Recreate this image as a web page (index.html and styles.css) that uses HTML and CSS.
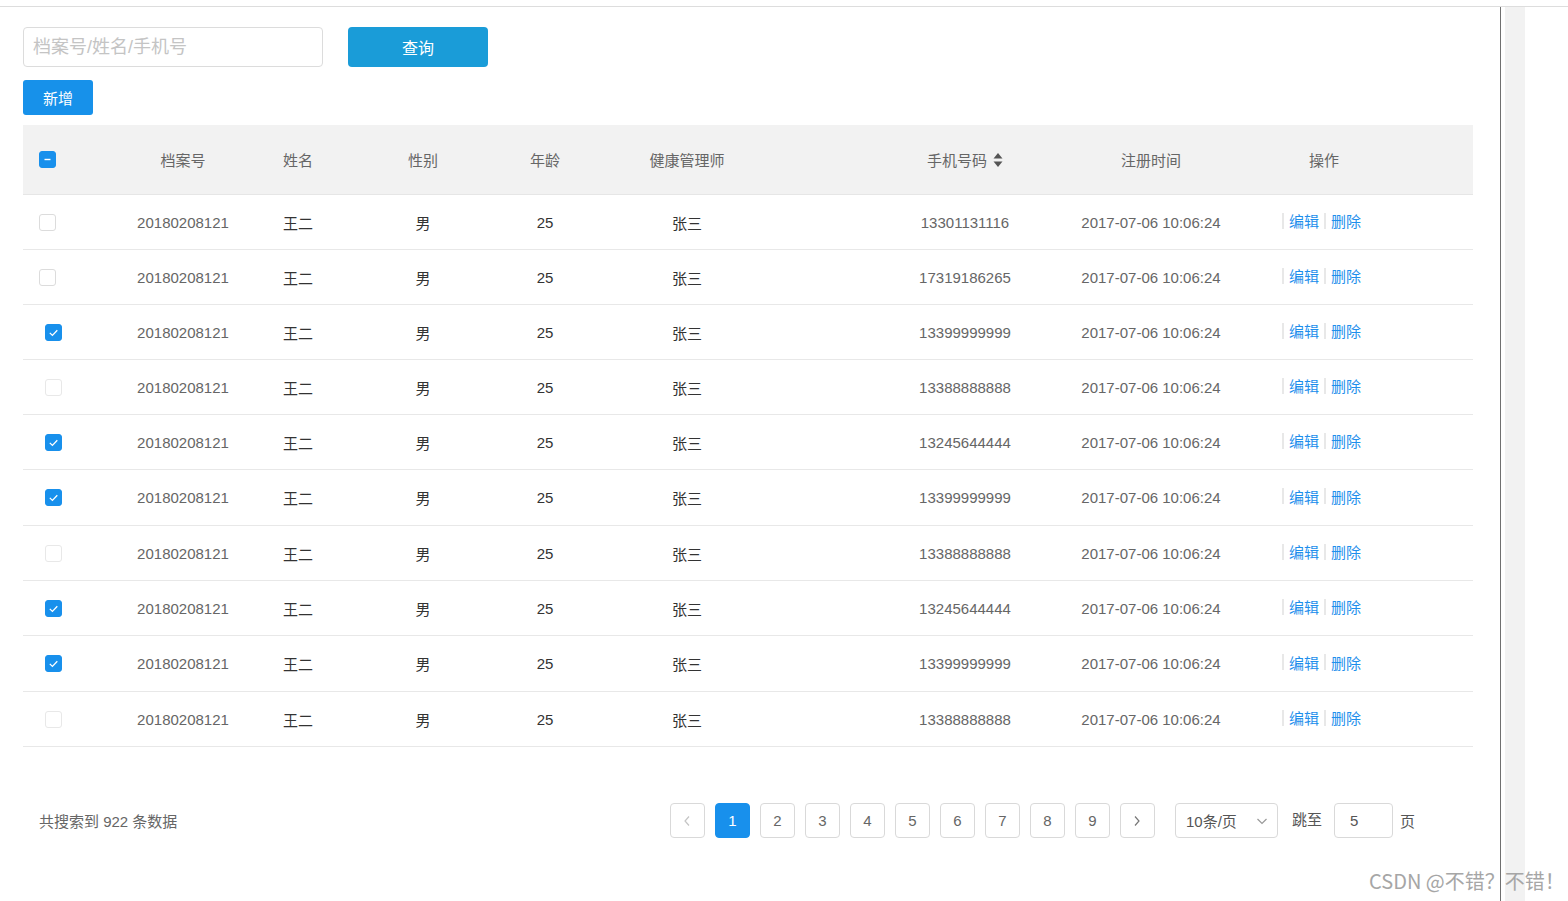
FILE: index.html
```html
<!DOCTYPE html>
<html lang="zh-CN">
<head>
<meta charset="utf-8">
<title>档案列表</title>
<link rel="stylesheet" href="styles.css">
</head>
<body>
<div class="topbar"></div>
<div class="layout">
  <div class="main">
    <div class="search-row">
      <input class="search-input" type="text" placeholder="档案号/姓名/手机号">
      <button class="btn-query">查询</button>
    </div>
    <button class="btn-add">新增</button>

    <div class="table">
      <div class="thead">
        <div class="cell cb-cell"><span class="cb cb-on"><svg width="17" height="17" viewBox="0 0 17 17"><rect x="5.5" y="7.8" width="6" height="1.4" fill="#fff"/></svg></span></div>
        <div class="cell">档案号</div>
        <div class="cell">姓名</div>
        <div class="cell">性别</div>
        <div class="cell">年龄</div>
        <div class="cell c-mgr">健康管理师</div>
        <div class="cell">手机号码<svg class="sort" width="10" height="16" viewBox="0 0 10 16"><path d="M5 1 L9.5 6.5 H0.5 Z" fill="#555"/><path d="M0.5 9.5 H9.5 L5 15 Z" fill="#555"/></svg></div>
        <div class="cell">注册时间</div>
        <div class="cell c-op-h">操作</div>
      </div>

      <div class="row">
        <div class="cell cb-cell"><span class="cb"></span></div>
        <div class="cell">20180208121</div>
        <div class="cell dark">王二</div>
        <div class="cell dark">男</div>
        <div class="cell dark">25</div>
        <div class="cell dark c-mgr">张三</div>
        <div class="cell">13301131116</div>
        <div class="cell">2017-07-06 10:06:24</div>
        <div class="cell c-op"><span class="sep"></span><a class="lnk">编辑</a><span class="sep"></span><a class="lnk">删除</a></div>
      </div>
      <div class="row">
        <div class="cell cb-cell"><span class="cb"></span></div>
        <div class="cell">20180208121</div>
        <div class="cell dark">王二</div>
        <div class="cell dark">男</div>
        <div class="cell dark">25</div>
        <div class="cell dark c-mgr">张三</div>
        <div class="cell">17319186265</div>
        <div class="cell">2017-07-06 10:06:24</div>
        <div class="cell c-op"><span class="sep"></span><a class="lnk">编辑</a><span class="sep"></span><a class="lnk">删除</a></div>
      </div>
      <div class="row">
        <div class="cell cb-cell shift"><span class="cb cb-on"><svg width="17" height="17" viewBox="0 0 17 17"><polyline points="4.8,8.9 7.4,11.4 12.3,6.2" fill="none" stroke="#fff" stroke-width="1.3"/></svg></span></div>
        <div class="cell">20180208121</div>
        <div class="cell dark">王二</div>
        <div class="cell dark">男</div>
        <div class="cell dark">25</div>
        <div class="cell dark c-mgr">张三</div>
        <div class="cell">13399999999</div>
        <div class="cell">2017-07-06 10:06:24</div>
        <div class="cell c-op"><span class="sep"></span><a class="lnk">编辑</a><span class="sep"></span><a class="lnk">删除</a></div>
      </div>
      <div class="row">
        <div class="cell cb-cell shift"><span class="cb cb-light"></span></div>
        <div class="cell">20180208121</div>
        <div class="cell dark">王二</div>
        <div class="cell dark">男</div>
        <div class="cell dark">25</div>
        <div class="cell dark c-mgr">张三</div>
        <div class="cell">13388888888</div>
        <div class="cell">2017-07-06 10:06:24</div>
        <div class="cell c-op"><span class="sep"></span><a class="lnk">编辑</a><span class="sep"></span><a class="lnk">删除</a></div>
      </div>
      <div class="row">
        <div class="cell cb-cell shift"><span class="cb cb-on"><svg width="17" height="17" viewBox="0 0 17 17"><polyline points="4.8,8.9 7.4,11.4 12.3,6.2" fill="none" stroke="#fff" stroke-width="1.3"/></svg></span></div>
        <div class="cell">20180208121</div>
        <div class="cell dark">王二</div>
        <div class="cell dark">男</div>
        <div class="cell dark">25</div>
        <div class="cell dark c-mgr">张三</div>
        <div class="cell">13245644444</div>
        <div class="cell">2017-07-06 10:06:24</div>
        <div class="cell c-op"><span class="sep"></span><a class="lnk">编辑</a><span class="sep"></span><a class="lnk">删除</a></div>
      </div>
      <div class="row tall">
        <div class="cell cb-cell shift"><span class="cb cb-on"><svg width="17" height="17" viewBox="0 0 17 17"><polyline points="4.8,8.9 7.4,11.4 12.3,6.2" fill="none" stroke="#fff" stroke-width="1.3"/></svg></span></div>
        <div class="cell">20180208121</div>
        <div class="cell dark">王二</div>
        <div class="cell dark">男</div>
        <div class="cell dark">25</div>
        <div class="cell dark c-mgr">张三</div>
        <div class="cell">13399999999</div>
        <div class="cell">2017-07-06 10:06:24</div>
        <div class="cell c-op"><span class="sep"></span><a class="lnk">编辑</a><span class="sep"></span><a class="lnk">删除</a></div>
      </div>
      <div class="row">
        <div class="cell cb-cell shift"><span class="cb cb-light"></span></div>
        <div class="cell">20180208121</div>
        <div class="cell dark">王二</div>
        <div class="cell dark">男</div>
        <div class="cell dark">25</div>
        <div class="cell dark c-mgr">张三</div>
        <div class="cell">13388888888</div>
        <div class="cell">2017-07-06 10:06:24</div>
        <div class="cell c-op"><span class="sep"></span><a class="lnk">编辑</a><span class="sep"></span><a class="lnk">删除</a></div>
      </div>
      <div class="row">
        <div class="cell cb-cell shift"><span class="cb cb-on"><svg width="17" height="17" viewBox="0 0 17 17"><polyline points="4.8,8.9 7.4,11.4 12.3,6.2" fill="none" stroke="#fff" stroke-width="1.3"/></svg></span></div>
        <div class="cell">20180208121</div>
        <div class="cell dark">王二</div>
        <div class="cell dark">男</div>
        <div class="cell dark">25</div>
        <div class="cell dark c-mgr">张三</div>
        <div class="cell">13245644444</div>
        <div class="cell">2017-07-06 10:06:24</div>
        <div class="cell c-op"><span class="sep"></span><a class="lnk">编辑</a><span class="sep"></span><a class="lnk">删除</a></div>
      </div>
      <div class="row tall">
        <div class="cell cb-cell shift"><span class="cb cb-on"><svg width="17" height="17" viewBox="0 0 17 17"><polyline points="4.8,8.9 7.4,11.4 12.3,6.2" fill="none" stroke="#fff" stroke-width="1.3"/></svg></span></div>
        <div class="cell">20180208121</div>
        <div class="cell dark">王二</div>
        <div class="cell dark">男</div>
        <div class="cell dark">25</div>
        <div class="cell dark c-mgr">张三</div>
        <div class="cell">13399999999</div>
        <div class="cell">2017-07-06 10:06:24</div>
        <div class="cell c-op"><span class="sep"></span><a class="lnk">编辑</a><span class="sep"></span><a class="lnk">删除</a></div>
      </div>
      <div class="row">
        <div class="cell cb-cell shift"><span class="cb cb-light"></span></div>
        <div class="cell">20180208121</div>
        <div class="cell dark">王二</div>
        <div class="cell dark">男</div>
        <div class="cell dark">25</div>
        <div class="cell dark c-mgr">张三</div>
        <div class="cell">13388888888</div>
        <div class="cell">2017-07-06 10:06:24</div>
        <div class="cell c-op"><span class="sep"></span><a class="lnk">编辑</a><span class="sep"></span><a class="lnk">删除</a></div>
      </div>
    </div>

    <div class="footer">
      <div class="total">共搜索到 922 条数据</div>
      <div class="pager">
        <span class="pg pg-nav"><svg width="10" height="12" viewBox="0 0 10 12"><polyline points="7,1.5 3,6 7,10.5" fill="none" stroke="#c4c4c4" stroke-width="1.2"/></svg></span>
        <span class="pg active">1</span>
        <span class="pg">2</span>
        <span class="pg">3</span>
        <span class="pg">4</span>
        <span class="pg">5</span>
        <span class="pg">6</span>
        <span class="pg">7</span>
        <span class="pg">8</span>
        <span class="pg">9</span>
        <span class="pg pg-nav"><svg width="10" height="12" viewBox="0 0 10 12"><polyline points="3,1.5 7,6 3,10.5" fill="none" stroke="#777" stroke-width="1.2"/></svg></span>
        <span class="size-select">10条/页<svg width="12" height="8" viewBox="0 0 12 8"><polyline points="1.5,2 6,6.5 10.5,2" fill="none" stroke="#999" stroke-width="1.2"/></svg></span>
        <span class="jump-label">跳至</span>
        <span class="jump-input">5</span>
        <span class="jump-unit">页</span>
      </div>
    </div>
  </div>
  <div class="vline"></div>
  <div class="vgap"></div>
  <div class="strip"></div>
</div>
<div class="watermark">CSDN @不错？不错！</div>
</body>
</html>
```

FILE: styles.css
```css
* {
  box-sizing: border-box;
}

body {
  margin: 0;
  position: relative;
  background: #fff;
  color: #666;
  font-family: "Liberation Sans", "Noto Sans CJK SC", sans-serif;
  font-size: 15px;
}

.topbar {
  height: 7px;
  border-bottom: 1px solid #dddddd;
}

.layout {
  display: flex;
  height: 894px;
}

.main {
  width: 1500px;
  padding: 20px 0 0 23px;
}

.vline {
  width: 1px;
  background: #707070;
}

.vgap {
  width: 4px;
}

.strip {
  width: 20px;
  background: #f2f2f2;
}

/* search */
.search-row {
  display: flex;
  align-items: center;
}

.search-input {
  width: 300px;
  height: 40px;
  border: 1px solid #dcdcdc;
  border-radius: 4px;
  padding: 0 0 0 9px;
  font-family: "Liberation Sans", "Noto Sans CJK SC", sans-serif;
  font-size: 18px;
  color: #333;
  outline: none;
}

.search-input::placeholder {
  color: #c4c4c4;
}

.btn-query {
  margin-left: 25px;
  width: 140px;
  height: 40px;
  border: none;
  border-radius: 4px;
  background: #1a9cd8;
  color: #fff;
  font-family: "Liberation Sans", "Noto Sans CJK SC", sans-serif;
  font-size: 16px;
  padding: 0;
}

.btn-add {
  display: block;
  margin-top: 13px;
  width: 70px;
  height: 35px;
  border: none;
  border-radius: 3px;
  background: #1791ea;
  color: #fff;
  font-family: "Liberation Sans", "Noto Sans CJK SC", sans-serif;
  font-size: 15px;
  padding: 0;
}

/* table */
.table {
  margin-top: 10px;
  width: 1450px;
}

.thead,
.row {
  display: grid;
  grid-template-columns: 87px 146px 84px 166px 78px 276px 210px 162px 241px;
  align-items: center;
}

.thead {
  height: 70px;
  background: #f2f2f2;
  border-bottom: 1px solid #e6e6e6;
  color: #666;
}

.row {
  height: 55px;
  border-bottom: 1px solid #e8e8e8;
}

.row.tall {
  height: 56px;
}

.cell {
  display: flex;
  justify-content: center;
  align-items: center;
  white-space: nowrap;
}

.row .cell {
  color: #666;
}

.row .cell.dark {
  color: #333;
}

.cb-cell {
  justify-content: flex-start;
  padding-left: 16px;
}

.cb-cell.shift {
  padding-left: 22px;
}

.cb {
  display: block;
  width: 17px;
  height: 17px;
  border: 1px solid #dcdcdc;
  border-radius: 3px;
  background: #fff;
}

.cb.cb-light {
  border-color: #e8e8e8;
}

.cb svg {
  display: block;
  margin: -1px;
}

.cb.cb-on {
  background: #1890ec;
  border-color: #1890ec;
}

.c-mgr {
  padding-right: 70px;
}

.sort {
  margin-left: 6px;
}

.c-op-h {
  padding-right: 57px;
}

.c-op {
  justify-content: flex-start;
  padding-left: 50px;
  margin-top: -3px;
}

.sep {
  display: inline-block;
  width: 2px;
  height: 16px;
  background: #e8e8e8;
}

.lnk {
  color: #1e8fec;
  margin: 0 5px;
}

/* footer */
.footer {
  margin-top: 56px;
  width: 1450px;
  height: 35px;
  display: flex;
  align-items: center;
  justify-content: space-between;
  padding: 0 58px 0 16px;
}

.total {
  color: #666;
}

.pager {
  display: flex;
  align-items: center;
}

.pg {
  width: 35px;
  height: 35px;
  margin-left: 10px;
  border: 1px solid #d9d9d9;
  border-radius: 4px;
  display: flex;
  justify-content: center;
  align-items: center;
  color: #666;
  font-size: 15px;
}

.pg:first-child {
  margin-left: 0;
}

.pg.active {
  background: #1890ec;
  border-color: #1890ec;
  color: #fff;
}

.size-select {
  margin-left: 20px;
  width: 103px;
  height: 35px;
  border: 1px solid #d9d9d9;
  border-radius: 4px;
  display: flex;
  align-items: center;
  justify-content: space-between;
  padding: 0 9px 0 10px;
  color: #555;
}

.jump-label {
  margin-left: 14px;
  margin-top: -4px;
  color: #555;
}

.jump-input {
  margin-left: 12px;
  width: 59px;
  height: 35px;
  border: 1px solid #d9d9d9;
  border-radius: 4px;
  display: flex;
  align-items: center;
  padding-left: 15px;
  color: #555;
}

.jump-unit {
  margin-left: 7px;
  color: #555;
}

.watermark {
  position: absolute;
  left: 1369px;
  top: 866px;
  font-family: "Noto Sans CJK SC", sans-serif;
  font-size: 20px;
  color: #a6a6a6;
  white-space: nowrap;
}
```
